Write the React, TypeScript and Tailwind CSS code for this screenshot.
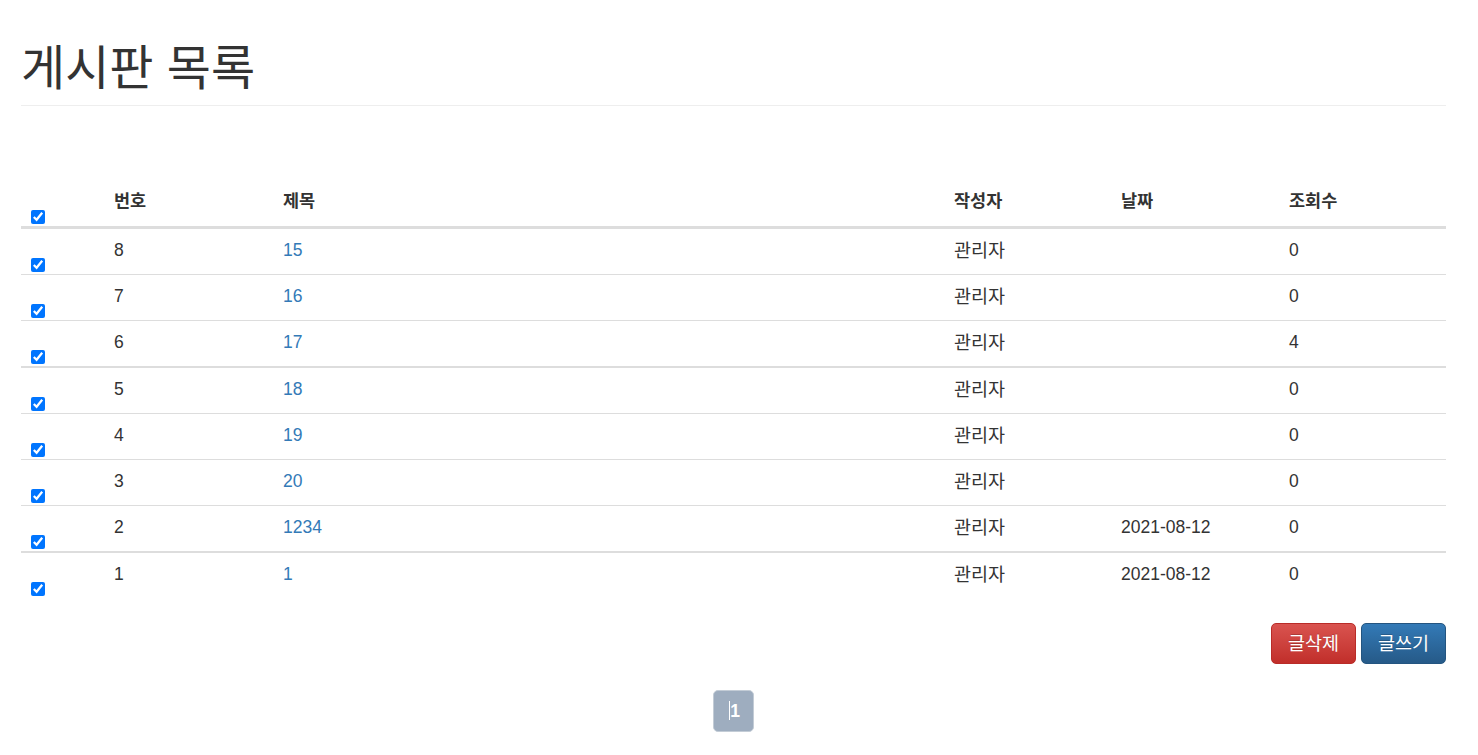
import React from "react";

const rows = [
  { no: "8", title: "15", author: "관리자", date: "", views: "0", b: "border-b border-[#ddd]" },
  { no: "7", title: "16", author: "관리자", date: "", views: "0", b: "border-b border-[#ddd]" },
  { no: "6", title: "17", author: "관리자", date: "", views: "4", b: "border-b-2 border-[#ddd]" },
  { no: "5", title: "18", author: "관리자", date: "", views: "0", b: "border-b border-[#ddd]" },
  { no: "4", title: "19", author: "관리자", date: "", views: "0", b: "border-b border-[#ddd]" },
  { no: "3", title: "20", author: "관리자", date: "", views: "0", b: "border-b border-[#ddd]" },
  { no: "2", title: "1234", author: "관리자", date: "2021-08-12", views: "0", b: "border-b-2 border-[#ddd]" },
  { no: "1", title: "1", author: "관리자", date: "2021-08-12", views: "0", b: "" },
];

function Check() {
  return (
    <input
      type="checkbox"
      checked
      readOnly
      className="block m-0 w-[14px] h-[14px]"
    />
  );
}

export default function App() {
  return (
    <div
      className="bg-white h-[755px] overflow-hidden text-[#333] text-[17.5px] leading-[25px]"
      style={{ fontFamily: '"Liberation Sans", "Noto Sans CJK KR", sans-serif' }}
    >
      <div className="ml-[21px] w-[1425px]">
        <div className="mt-[44px] pb-[11px] border-b border-[#eee]">
          <h1 className="text-[48px] leading-[50px] font-normal text-[#333]">게시판 목록</h1>
        </div>

        <div className="mt-[73px]">
          {/* header */}
          <div className="flex h-[50px] border-b-[3px] border-[#ddd] font-bold">
            <div className="w-[85px] flex items-end pl-[10px] pb-[2px]">
              <Check />
            </div>
            <div className="w-[169px] pl-[8px] pt-[10px]">번호</div>
            <div className="w-[671px] pl-[8px] pt-[10px]">제목</div>
            <div className="w-[167px] pl-[8px] pt-[10px]">작성자</div>
            <div className="w-[168px] pl-[8px] pt-[10px]">날짜</div>
            <div className="flex-1 pl-[8px] pt-[10px]">조회수</div>
          </div>
          {rows.map((r) => (
            <div key={r.no} className={`flex h-[45px] box-content ${r.b}`}>
              <div className="w-[85px] flex items-end pl-[10px] pb-[2px]">
                <Check />
              </div>
              <div className="w-[169px] pl-[8px] pt-[9px]">{r.no}</div>
              <div className="w-[671px] pl-[8px] pt-[9px]">
                <a className="text-[#337ab7]">{r.title}</a>
              </div>
              <div className="w-[167px] pl-[8px] pt-[9px] text-[18.5px]">{r.author}</div>
              <div className="w-[168px] pl-[8px] pt-[9px]">{r.date}</div>
              <div className="flex-1 pl-[8px] pt-[9px]">{r.views}</div>
            </div>
          ))}
        </div>

        <div className="mt-[25px] flex justify-end gap-[5px]">
          <button className="w-[85px] h-[41px] flex items-center justify-center rounded-[5px] border border-[#b92c28] bg-gradient-to-b from-[#d9534f] to-[#c12e2a] text-white text-[18.5px] [text-shadow:0_-1px_0_rgba(0,0,0,0.2)]">
            글삭제
          </button>
          <button className="w-[85px] h-[41px] flex items-center justify-center rounded-[5px] border border-[#245580] bg-gradient-to-b from-[#337ab7] to-[#265a88] text-white text-[18.5px] [text-shadow:0_-1px_0_rgba(0,0,0,0.2)]">
            글쓰기
          </button>
        </div>

        <div className="mt-[26px] flex justify-center">
          <div className="relative w-[41px] h-[42px] rounded-[5px] border border-[#c3ccd6] bg-[#9eadbf] flex items-center justify-center text-white font-bold">
            <span className="absolute left-[15px] top-[10px] w-px h-[19px] bg-white" />
            <span className="ml-[3px]">1</span>
          </div>
        </div>
      </div>
    </div>
  );
}
